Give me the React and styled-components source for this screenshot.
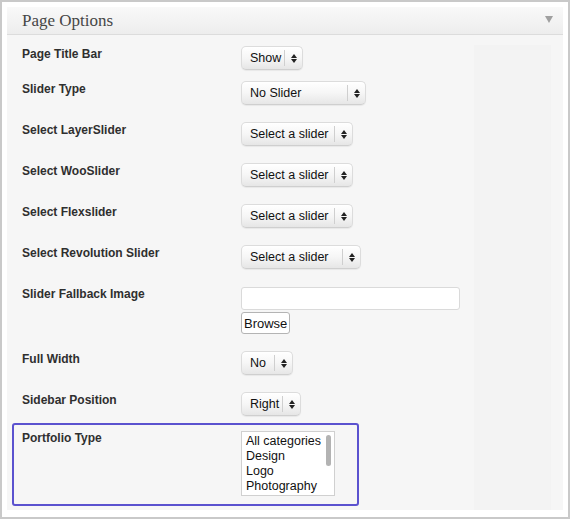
import React from "react";
import styled, { createGlobalStyle } from "styled-components";

const GlobalStyle = createGlobalStyle`
  html, body { margin: 0; padding: 0; background: #fff; }
  body { font-family: "Liberation Sans", Arial, sans-serif; }
`;

const Frame = styled.div`
  box-sizing: border-box;
  width: 570px;
  height: 519px;
  border: 2px solid #c9c9c9;
  background: #fff;
  padding: 5px;
`;

const Panel = styled.div`
  height: 503px;
  background: #f6f6f6;
  display: flex;
  flex-direction: column;
`;

const Header = styled.div`
  height: 27px;
  border-bottom: 1px solid #dcdcdc;
  background: linear-gradient(#f9f9f9, #ededed);
  display: flex;
  align-items: center;
  justify-content: space-between;
  padding: 0 10px 0 15px;
`;

const Title = styled.h3`
  margin: 0;
  font-family: "Liberation Serif", Georgia, serif;
  font-weight: normal;
  font-size: 17px;
  color: #464646;
`;

const Toggle = styled.span`
  width: 0;
  height: 0;
  border-left: 4px solid transparent;
  border-right: 4px solid transparent;
  border-top: 7px solid #a0a0a0;
  margin-top: -2px;
`;

const Body = styled.div`
  flex: 1;
  display: flex;
  padding: 10px 12px 0 5px;
`;

const Fields = styled.div`
  flex: 1;
  padding-top: 1px;
`;

const Aside = styled.div`
  width: 77px;
  background: #f3f3f3;
`;

const Row = styled.div`
  display: grid;
  grid-template-columns: 219px auto;
  padding-left: 10px;
  margin-bottom: ${({ $space }) => $space ?? 17}px;
`;

const Highlight = styled(Row)`
  border: 2px solid #5b52cf;
  border-radius: 3px;
  padding: 5px 0 8px 8px;
  width: 335px;
`;

const Label = styled.label`
  font-size: 12px;
  font-weight: bold;
  color: #2f2f2f;
  line-height: 14px;
  padding-top: 1px;
`;

const Control = styled.div`
  display: flex;
  flex-direction: column;
  align-items: flex-start;
  gap: 2px;
`;

const SelectBox = styled.div`
  box-sizing: border-box;
  width: ${({ $w }) => $w}px;
  height: 24px;
  display: flex;
  align-items: center;
  border-radius: 5px;
  border: 1px solid #dcdcdc;
  border-bottom-color: #cfcfcf;
  background: linear-gradient(#ffffff 0%, #f6f6f6 50%, #e6e6e6 100%);
  box-shadow: inset 0 1px 0 #fff, 0 1px 1px rgba(0, 0, 0, 0.06);
  font-size: 12.5px;
  color: #111;
`;

const SelectText = styled.span`
  flex: 1;
  padding-left: 8px;
  white-space: nowrap;
`;

const Arrows = styled.span`
  width: 17px;
  height: 16px;
  border-left: 1px solid #cfcfcf;
  display: flex;
  flex-direction: column;
  align-items: center;
  justify-content: center;
  gap: 1px;
  &::before,
  &::after {
    content: "";
    width: 0;
    height: 0;
    border-left: 3px solid transparent;
    border-right: 3px solid transparent;
  }
  &::before { border-bottom: 4px solid #222; }
  &::after { border-top: 4px solid #222; }
`;

const TextInput = styled.input`
  box-sizing: border-box;
  width: 219px;
  height: 23px;
  margin: 1px 0 0;
  border: 1px solid #dadada;
  border-radius: 3px;
  background: #fff;
  outline: none;
`;

const Button = styled.button`
  box-sizing: border-box;
  height: 22px;
  padding: 0 2px;
  border: 1px solid #b4b4b4;
  border-radius: 3px;
  background: #fff;
  font-family: "Liberation Sans", Arial, sans-serif;
  font-size: 13px;
  color: #111;
`;

const ListBox = styled.div`
  box-sizing: border-box;
  position: relative;
  width: 94px;
  height: 65px;
  margin-top: 1px;
  border: 1px solid #d0d0d0;
  background: #fff;
  padding: 2px 0 0 4px;
  font-size: 12.5px;
  line-height: 15px;
  color: #111;
`;

const Thumb = styled.span`
  position: absolute;
  right: 3px;
  top: 3px;
  width: 5px;
  height: 31px;
  border-radius: 3px;
  background: #b3b3b3;
`;

const Select = ({ w, children }) => (
  <SelectBox $w={w}>
    <SelectText>{children}</SelectText>
    <Arrows />
  </SelectBox>
);

export default function App() {
  return (
    <>
      <GlobalStyle />
      <Frame>
        <Panel>
          <Header>
            <Title>Page Options</Title>
            <Toggle />
          </Header>
          <Body>
            <Fields>
              <Row $space={11}>
                <Label>Page Title Bar</Label>
                <Control><Select w={62}>Show</Select></Control>
              </Row>
              <Row>
                <Label>Slider Type</Label>
                <Control><Select w={125}>No Slider</Select></Control>
              </Row>
              <Row>
                <Label>Select LayerSlider</Label>
                <Control><Select w={112}>Select a slider</Select></Control>
              </Row>
              <Row>
                <Label>Select WooSlider</Label>
                <Control><Select w={112}>Select a slider</Select></Control>
              </Row>
              <Row>
                <Label>Select Flexslider</Label>
                <Control><Select w={112}>Select a slider</Select></Control>
              </Row>
              <Row>
                <Label>Select Revolution Slider</Label>
                <Control><Select w={120}>Select a slider</Select></Control>
              </Row>
              <Row $space={17}>
                <Label>Slider Fallback Image</Label>
                <Control>
                  <TextInput type="text" />
                  <Button>Browse</Button>
                </Control>
              </Row>
              <Row>
                <Label>Full Width</Label>
                <Control><Select w={52}>No</Select></Control>
              </Row>
              <Row $space={7}>
                <Label>Sidebar Position</Label>
                <Control><Select w={60}>Right</Select></Control>
              </Row>
              <Highlight $space={0}>
                <Label>Portfolio Type</Label>
                <Control>
                  <ListBox>
                    <div>All categories</div>
                    <div>Design</div>
                    <div>Logo</div>
                    <div>Photography</div>
                    <Thumb />
                  </ListBox>
                </Control>
              </Highlight>
            </Fields>
            <Aside />
          </Body>
        </Panel>
      </Frame>
    </>
  );
}
